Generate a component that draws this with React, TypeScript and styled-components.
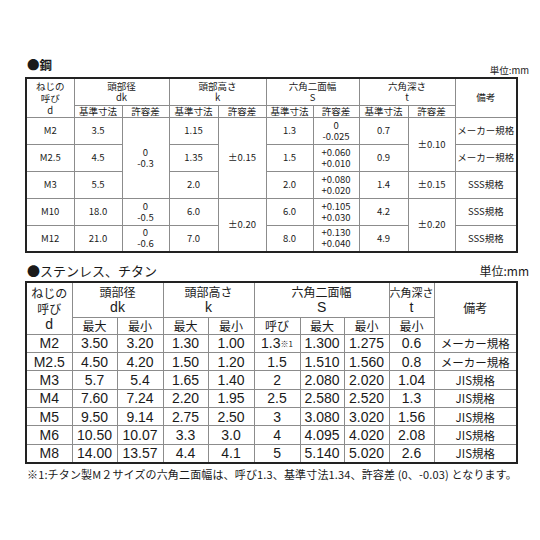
import React from "react";
import styled, { createGlobalStyle } from "styled-components";

const Global = createGlobalStyle`
  html, body { margin: 0; padding: 0; background: #ffffff; }
  body { font-family: "Noto Sans CJK JP", sans-serif; color: #1a1a1a; }
`;

const Page = styled.div`
  width: 540px;
  height: 540px;
  box-sizing: border-box;
  padding: 56px 0 0 25px;
  display: flex;
  flex-direction: column;
`;

const SectionHead = styled.div<{ $h: number; $mt?: number }>`
  width: 504px;
  height: ${(p) => p.$h}px;
  margin-top: ${(p) => p.$mt ?? 0}px;
  padding-left: 2px;
  box-sizing: border-box;
  display: flex;
  justify-content: space-between;
  align-items: flex-end;
`;

const Title = styled.div<{ $size: number; $bold?: boolean; $pb: number }>`
  font-size: ${(p) => p.$size}px;
  font-weight: ${(p) => (p.$bold ? 700 : 400)};
  line-height: 1.2;
  padding-bottom: ${(p) => p.$pb}px;
`;

const Unit = styled.div<{ $size: number; $pb: number }>`
  font-size: ${(p) => p.$size}px;
  line-height: 1.1;
  padding-bottom: ${(p) => p.$pb}px;
`;

const Table = styled.table<{ $font: string; $size: number; $lh: number }>`
  width: 491px;
  table-layout: fixed;
  border-collapse: collapse;
  border: 2px solid #222;
  font-family: ${(p) => p.$font};
  font-size: ${(p) => p.$size}px;
  line-height: ${(p) => p.$lh}px;
  td, th {
    border: 1px solid #8c8c8c;
    padding: 0;
    text-align: center;
    vertical-align: middle;
    font-weight: 400;
    white-space: nowrap;
    overflow: hidden;
  }
`;

const Row = styled.tr<{ $h: number }>`
  height: ${(p) => p.$h}px;
`;

const Lines = styled.div<{ $lh: number }>`
  line-height: ${(p) => p.$lh}px;
`;

const Jp = styled.span<{ $size: number }>`
  font-family: "Noto Sans CJK JP", sans-serif;
  font-size: ${(p) => p.$size}px;
`;

const Note = styled.span`
  font-size: 8px;
  vertical-align: 1px;
  font-family: "Noto Sans CJK JP", sans-serif;
`;

const Footnote = styled.div`
  margin-top: 3px;
  padding-left: 2px;
  font-size: 11px;
  line-height: 14px;
  letter-spacing: 0.15px;
  white-space: nowrap;
`;

const topCols = [48, 48, 47, 49, 48, 47, 46, 49, 47, 62];
const botCols = [46, 45, 46, 45, 46, 46, 44, 45, 45, 83];

const Two = ({ a, b }: { a: string; b: string }) => (
  <Lines $lh={11}>
    {a}
    <br />
    {b}
  </Lines>
);

const steel = (
  <Table $font={'"Noto Sans CJK JP", sans-serif'} $size={9.5} $lh={11}>
    <colgroup>
      {topCols.map((w, i) => (
        <col key={i} style={{ width: w }} />
      ))}
    </colgroup>
    <thead>
      <Row $h={27}>
        <th rowSpan={2}>
          <Lines $lh={12}>
            ねじの
            <br />
            呼び
            <br />d
          </Lines>
        </th>
        <th colSpan={2}>
          <Two a="頭部径" b="dk" />
        </th>
        <th colSpan={2}>
          <Two a="頭部高さ" b="k" />
        </th>
        <th colSpan={2}>
          <Two a="六角二面幅" b="S" />
        </th>
        <th colSpan={2}>
          <Two a="六角深さ" b="t" />
        </th>
        <th rowSpan={2}>備考</th>
      </Row>
      <Row $h={12}>
        <th>基準寸法</th>
        <th>許容差</th>
        <th>基準寸法</th>
        <th>許容差</th>
        <th>基準寸法</th>
        <th>許容差</th>
        <th>基準寸法</th>
        <th>許容差</th>
      </Row>
    </thead>
    <tbody>
      <Row $h={27}>
        <td>M2</td>
        <td>3.5</td>
        <td rowSpan={3}>
          <Two a="0" b="-0.3" />
        </td>
        <td>1.15</td>
        <td rowSpan={3}>±0.15</td>
        <td>1.3</td>
        <td>
          <Two a="0" b="-0.025" />
        </td>
        <td>0.7</td>
        <td rowSpan={2}>±0.10</td>
        <td>メーカー規格</td>
      </Row>
      <Row $h={27}>
        <td>M2.5</td>
        <td>4.5</td>
        <td>1.35</td>
        <td>1.5</td>
        <td>
          <Two a="+0.060" b="+0.010" />
        </td>
        <td>0.9</td>
        <td>メーカー規格</td>
      </Row>
      <Row $h={27}>
        <td>M3</td>
        <td>5.5</td>
        <td>2.0</td>
        <td>2.0</td>
        <td>
          <Two a="+0.080" b="+0.020" />
        </td>
        <td>1.4</td>
        <td>±0.15</td>
        <td>SSS規格</td>
      </Row>
      <Row $h={27}>
        <td>M10</td>
        <td>18.0</td>
        <td>
          <Two a="0" b="-0.5" />
        </td>
        <td>6.0</td>
        <td rowSpan={2}>±0.20</td>
        <td>6.0</td>
        <td>
          <Two a="+0.105" b="+0.030" />
        </td>
        <td>4.2</td>
        <td rowSpan={2}>±0.20</td>
        <td>SSS規格</td>
      </Row>
      <Row $h={27}>
        <td>M12</td>
        <td>21.0</td>
        <td>
          <Two a="0" b="-0.6" />
        </td>
        <td>7.0</td>
        <td>8.0</td>
        <td>
          <Two a="+0.130" b="+0.040" />
        </td>
        <td>4.9</td>
        <td>SSS規格</td>
      </Row>
    </tbody>
  </Table>
);

type SRow = [string, string, string, string, string, string, string, string, string, string];

const stainless: SRow[] = [
  ["M2", "3.50", "3.20", "1.30", "1.00", "1.3", "1.300", "1.275", "0.6", "メーカー規格"],
  ["M2.5", "4.50", "4.20", "1.50", "1.20", "1.5", "1.510", "1.560", "0.8", "メーカー規格"],
  ["M3", "5.7", "5.4", "1.65", "1.40", "2", "2.080", "2.020", "1.04", "JIS規格"],
  ["M4", "7.60", "7.24", "2.20", "1.95", "2.5", "2.580", "2.520", "1.3", "JIS規格"],
  ["M5", "9.50", "9.14", "2.75", "2.50", "3", "3.080", "3.020", "1.56", "JIS規格"],
  ["M6", "10.50", "10.07", "3.3", "3.0", "4", "4.095", "4.020", "2.08", "JIS規格"],
  ["M8", "14.00", "13.57", "4.4", "4.1", "5", "5.140", "5.020", "2.6", "JIS規格"],
];

const Stainless = () => (
  <Table
    $font={'"Liberation Sans Narrow", "Liberation Sans", "Noto Sans CJK JP", sans-serif'}
    $size={14}
    $lh={14}
  >
    <colgroup>
      {botCols.map((w, i) => (
        <col key={i} style={{ width: w }} />
      ))}
    </colgroup>
    <thead>
      <Row $h={35}>
        <th rowSpan={2}>
          <Lines $lh={15}>
            <Jp $size={12}>ねじの</Jp>
            <br />
            <Jp $size={12}>呼び</Jp>
            <br />d
          </Lines>
        </th>
        <th colSpan={2}>
          <Lines $lh={15}>
            <Jp $size={12}>頭部径</Jp>
            <br />
            dk
          </Lines>
        </th>
        <th colSpan={2}>
          <Lines $lh={15}>
            <Jp $size={12}>頭部高さ</Jp>
            <br />k
          </Lines>
        </th>
        <th colSpan={3}>
          <Lines $lh={15}>
            <Jp $size={12}>六角二面幅</Jp>
            <br />S
          </Lines>
        </th>
        <th>
          <Lines $lh={15}>
            <Jp $size={11}>六角深さ</Jp>
            <br />t
          </Lines>
        </th>
        <th rowSpan={2}>
          <Jp $size={12}>備考</Jp>
        </th>
      </Row>
      <Row $h={17}>
        {["最大", "最小", "最大", "最小", "呼び", "最大", "最小", "最小"].map((t, i) => (
          <th key={i}>
            <Jp $size={12}>{t}</Jp>
          </th>
        ))}
      </Row>
    </thead>
    <tbody>
      {stainless.map((r) => (
        <Row $h={18.4} key={r[0]}>
          {r.map((c, i) => (
            <td key={i}>
              {i === 9 ? (
                <Jp $size={11.5}>{c}</Jp>
              ) : (
                <>
                  {c}
                  {i === 5 && r[0] === "M2" ? <Note>※1</Note> : null}
                </>
              )}
            </td>
          ))}
        </Row>
      ))}
    </tbody>
  </Table>
);

export default function App() {
  return (
    <>
      <Global />
      <Page>
        <SectionHead $h={21}>
          <Title $size={12.5} $bold $pb={5}>
            ●鋼
          </Title>
          <Unit $size={9.5} $pb={2}>
            単位:mm
          </Unit>
        </SectionHead>
        {steel}
        <SectionHead $h={22} $mt={6}>
          <Title $size={13} $pb={2}>●ステンレス、チタン</Title>
          <Unit $size={12} $pb={4}>
            単位:mm
          </Unit>
        </SectionHead>
        <Stainless />
        <Footnote>※1:チタン製M２サイズの六角二面幅は、呼び1.3、基準寸法1.34、許容差 (0、-0.03) となります。</Footnote>
      </Page>
    </>
  );
}
